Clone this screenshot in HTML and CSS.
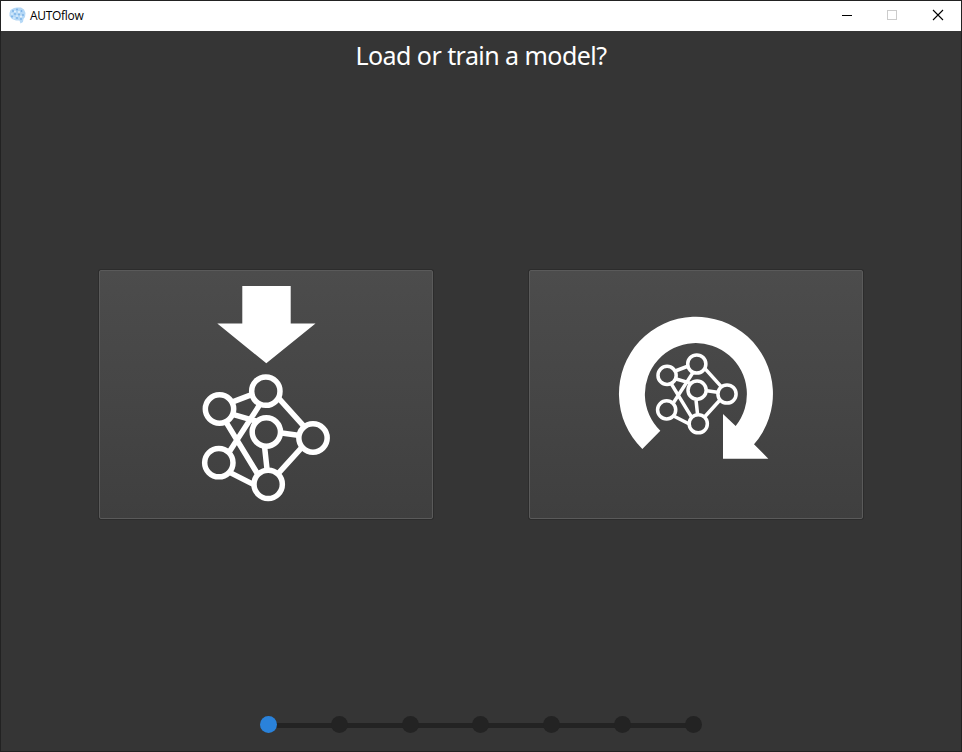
FILE: index.html
```html
<!DOCTYPE html>
<html lang="en">
<head>
<meta charset="utf-8">
<title>AUTOflow</title>
<link rel="stylesheet" href="styles.css">
</head>
<body>
<div class="window">
  <header class="titlebar">
    <svg class="app-icon" viewBox="0 0 17 17">
      <path fill="#b5d8f6" d="M1.500 3 5 1 8 .5 12 .5 15 2.500 16.500 6 16 10 14.500 12 14 15 11.500 16.500 10.500 13.500 7 13.500 3 12 .5 9 .5 6Z"/>
      <g fill="#78b0e6"><circle cx="4" cy="4" r=".9"/><circle cx="8" cy="2.500" r=".9"/><circle cx="12.500" cy="4" r=".9"/><circle cx="6" cy="7" r=".9"/><circle cx="14" cy="8" r=".9"/><circle cx="10" cy="7.500" r=".9"/><circle cx="3" cy="9.500" r=".9"/><circle cx="8" cy="11" r=".9"/><circle cx="12" cy="12" r=".9"/></g>
      <g fill="#edf7fe"><circle cx="6" cy="4.500" r=".9"/><circle cx="10" cy="5" r=".9"/><circle cx="3" cy="7" r=".8"/><circle cx="8" cy="9" r=".8"/><circle cx="12" cy="9.500" r=".9"/><circle cx="5" cy="11" r=".7"/></g>
    </svg>
    <span class="app-name">AUTOflow</span>
    <div class="controls">
      <svg viewBox="0 0 46 30"><path d="M17 14.500H27" stroke="#000"/></svg>
      <svg viewBox="0 0 46 30"><rect x="17.500" y="9.500" width="9" height="9" fill="none" stroke="#ccc"/></svg>
      <svg viewBox="0 0 46 30"><path d="M17 9 27 19M27 9 17 19" stroke="#000" stroke-width="1.100"/></svg>
    </div>
  </header>
  <main class="content">
    <h1 class="heading">Load or train a model?</h1>
    <div class="choices">
      <button class="choice" aria-label="Load a model">
        <svg viewBox="99 270 334 249">
          <defs>
            <g id="network" fill="none" stroke="#fff" stroke-width="16.500">
              <path d="M130 395 185 374M131 434 198 453M109 458 201 609M208 406 119 544M267 386 340 467M275 489 324 496M224 533 231 597M119 607 190 643M335 533 267 608"/>
              <circle cx="227.500" cy="363.500" r="42.500"/>
              <circle cx="88.500" cy="417" r="42.500"/>
              <circle cx="229" cy="486" r="42.500"/>
              <circle cx="369" cy="504" r="42.500"/>
              <circle cx="86.500" cy="578" r="42.500"/>
              <circle cx="234.500" cy="643" r="42.500"/>
            </g>
          </defs>
          <path fill="#fff" d="M242.300 286H290.700V323.500H315.500L266.300 363.300 217.300 323.500H242.300Z"/>
          <use href="#network" transform="translate(190 270) scale(.33333)"/>
        </svg>
      </button>
      <button class="choice" aria-label="Train a model">
        <svg viewBox="529 270 334 249">
          <g transform="translate(600 300) scale(.33333)">
            <path fill="#fff" d="M127 447A231 231 0 1 1 462 433L505 476H369V342L407 378A153 153 0 1 0 181 392Z"/>
            <use href="#network" transform="translate(144.500 -41) scale(.641)"/>
          </g>
        </svg>
      </button>
    </div>
    <div class="steps">
      <i class="step active"></i><i class="step"></i><i class="step"></i><i class="step"></i><i class="step"></i><i class="step"></i><i class="step"></i>
    </div>
  </main>
</div>
</body>
</html>
```
FILE: styles.css
```css
* { box-sizing: border-box; }
body { margin: 0; }
.window {
  width: 962px;
  height: 752px;
  border: 1px solid #222;
  background: #353535;
  display: flex;
  flex-direction: column;
  overflow: hidden;
  font-family: "Noto Sans", "Open Sans", sans-serif;
}
.titlebar {
  height: 30px;
  flex: none;
  background: #fff;
  display: flex;
  align-items: center;
  padding-left: 8px;
}
.app-icon { width: 17px; height: 17px; margin-top: -2px; }
.app-name {
  margin-left: 4px;
  font-family: "Open Sans", sans-serif;
  font-size: 12px;
  letter-spacing: -0.3px;
  line-height: 16px;
  color: #000;
}
.controls { margin-left: auto; display: flex; margin-right: -1px; }
.controls svg { width: 46px; height: 30px; display: block; }
.controls svg:first-child { margin-right: -1px; }
.content { flex: 1; display: flex; flex-direction: column; align-items: center; }
.heading {
  margin: 6px 0 0;
  height: 37px;
  line-height: 36px;
  font-size: 25px;
  font-weight: 400;
  letter-spacing: -0.55px;
  color: #fff;
  white-space: nowrap;
}
.choices { margin-top: 196px; display: flex; gap: 96px; }
.choice {
  width: 334px;
  height: 249px;
  padding: 0;
  border: 1px solid #5a5a5a;
  border-radius: 2px;
  background: linear-gradient(#4c4c4c, #3f3f3f);
  box-shadow: 0 0 0 1px #2c2c2c;
}
.choice svg { display: block; width: 334px; height: 249px; margin: -1px; }
.steps {
  margin-top: 197px;
  width: 442px;
  height: 17px;
  display: flex;
  justify-content: space-between;
  background: linear-gradient(#232323, #232323) center 7px / 426px 5px no-repeat;
}
.step { width: 17px; height: 17px; border-radius: 50%; background: #232323; }
.step.active { background: #2a82da; }
```
